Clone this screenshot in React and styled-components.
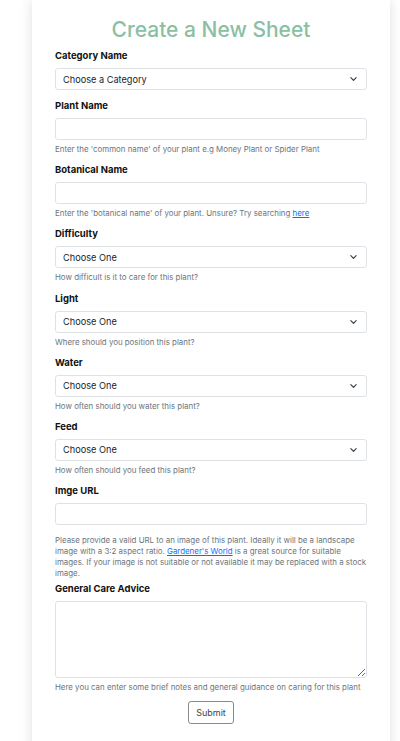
import React from "react";
import styled, { createGlobalStyle } from "styled-components";

const GlobalStyle = createGlobalStyle`
  html, body {
    margin: 0;
    padding: 0;
    background: #ffffff;
    font-family: Inter, "Liberation Sans", Arial, sans-serif;
    color: #212529;
  }
  * { box-sizing: border-box; }
`;

/*-------------- Card --------------------*/
const Card = styled.div`
  margin-left: 32px;
  width: 358px;
  min-height: 760px;
  background: #fff;
  box-shadow: 0 0 12px rgba(0, 0, 0, 0.13);
  padding: 15px 23px 20px;
`;

const Title = styled.h1`
  margin: 0;
  text-align: center;
  font-size: 21px;
  line-height: 30px;
  font-weight: 500;
  color: #8bbfa3;
  margin-bottom: 4px;
`;

/*-------------- Form parts --------------------*/
const Group = styled.div`
  margin-bottom: ${(p) => p.$mb ?? 8.2}px;
`;

const Label = styled.label`
  display: block;
  font-size: 9.5px;
  font-weight: 700;
  line-height: 14px;
  margin-bottom: 5px;
  color: #111;
`;

const fieldStyles = `
  display: block;
  width: 100%;
  height: 22px;
  border: 1px solid #dee2e6;
  border-radius: 3px;
  background: #fff;
  font-family: Inter, "Liberation Sans", Arial, sans-serif;
  font-size: 9.2px;
  color: #212529;
  padding: 0 7px;
  outline: none;
`;

const Input = styled.input`
  ${fieldStyles}
`;

const SelectWrap = styled.div`
  position: relative;
`;

const Select = styled.select`
  ${fieldStyles}
  appearance: none;
  -webkit-appearance: none;
  padding-right: 24px;
`;

const Chevron = styled.svg`
  position: absolute;
  right: 10px;
  top: 8px;
  width: 7px;
  height: 6px;
  pointer-events: none;
`;

const TextArea = styled.textarea`
  ${fieldStyles}
  height: 77px;
  padding: 4px 7px;
  resize: vertical;
`;

const Help = styled.div`
  font-size: 7.9px;
  line-height: ${(p) => p.$lh ?? 12}px;
  color: #6c757d;
  margin-top: ${(p) => p.$mt ?? 3}px;
`;

const Link = styled.a`
  color: #0d6efd;
  text-decoration: underline;
`;

const ButtonRow = styled.div`
  display: flex;
  justify-content: center;
  margin-top: 8px;
`;

const Button = styled.button`
  font-family: Inter, "Liberation Sans", Arial, sans-serif;
  font-size: 9px;
  color: #444;
  background: #fff;
  border: 1px solid #8a8a8a;
  border-radius: 3px;
  height: 23px;
  padding: 0 7px;
`;

const ChevronIcon = () => (
  <Chevron viewBox="0 0 8 6">
    <path d="M1 1.5 L4 4.5 L7 1.5" fill="none" stroke="#343a40" strokeWidth="1.3" strokeLinecap="round" strokeLinejoin="round" />
  </Chevron>
);

const SelectField = ({ text }) => (
  <SelectWrap>
    <Select defaultValue="">
      <option value="">{text}</option>
    </Select>
    <ChevronIcon />
  </SelectWrap>
);

const choices = [
  { label: "Difficulty", help: "How difficult is it to care for this plant?" },
  { label: "Light", help: "Where should you position this plant?" },
  { label: "Water", help: "How often should you water this plant?" },
  { label: "Feed", help: "How often should you feed this plant?" },
];

/*------------- Main Component ------------------*/
const App = () => {
  return (
    <>
      <GlobalStyle />
      <Card>
        <Title>Create a New Sheet</Title>

        <Group $mb={9}>
          <Label>Category Name</Label>
          <SelectField text="Choose a Category" />
        </Group>

        <Group>
          <Label>Plant Name</Label>
          <Input type="text" />
          <Help>Enter the 'common name' of your plant e.g Money Plant or Spider Plant</Help>
        </Group>

        <Group>
          <Label>Botanical Name</Label>
          <Input type="text" />
          <Help>
            Enter the 'botanical name' of your plant. Unsure? Try searching <Link href="#">here</Link>
          </Help>
        </Group>

        {choices.map((c) => (
          <Group key={c.label}>
            <Label>{c.label}</Label>
            <SelectField text="Choose One" />
            <Help>{c.help}</Help>
          </Group>
        ))}

        <Group $mb={4}>
          <Label>Imge URL</Label>
          <Input type="text" />
          <Help $mt={10} $lh={10.8}>
            Please provide a valid URL to an image of this plant. Ideally it will be a landscape
            image with a 3:2 aspect ratio. <Link href="#">Gardener's World</Link> is a great source
            for suitable images. If your image is not suitable or not available it may be replaced
            with a stock image.
          </Help>
        </Group>

        <Group $mb={0}>
          <Label>General Care Advice</Label>
          <TextArea />
          <Help>Here you can enter some brief notes and general guidance on caring for this plant</Help>
        </Group>

        <ButtonRow>
          <Button>Submit</Button>
        </ButtonRow>
      </Card>
    </>
  );
};

export default App;
